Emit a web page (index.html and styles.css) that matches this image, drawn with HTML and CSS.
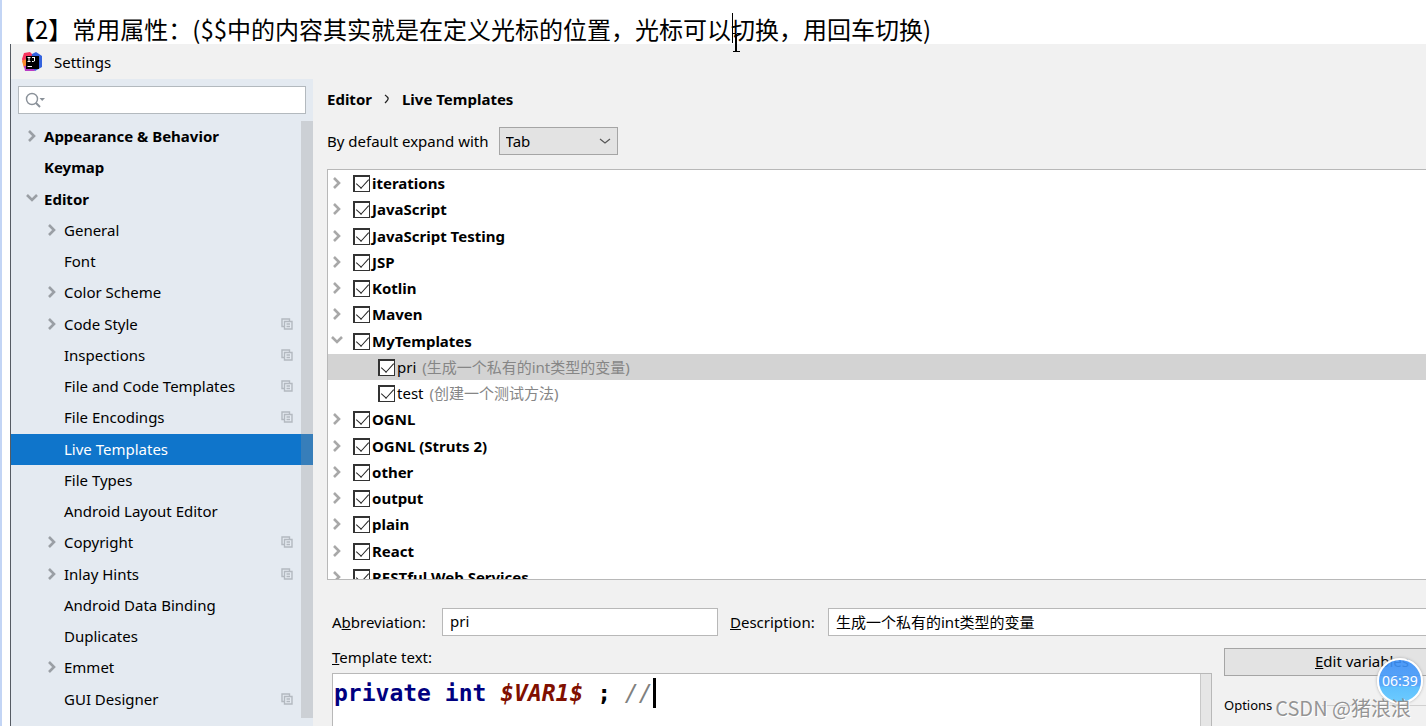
FILE: index.html
```html
<!doctype html>
<html lang="zh">
<head>
    <meta charset="UTF-8">
    <meta name="viewport" content="width=device-width, initial-scale=1.0">
    <title>Settings</title>
    <link rel="stylesheet" href="styles.css">
</head>
<body>
<!-- 公用图标 -->
<svg class="sprite" aria-hidden="true">
    <symbol id="right" viewBox="0 0 12 12"><path d="M3 1 L8 6 L3 11" fill="none" stroke="currentColor" stroke-width="2.6"/></symbol>
    <symbol id="down" viewBox="0 0 12 12"><path d="M1 2 L6 7 L11 2" fill="none" stroke="currentColor" stroke-width="2.6"/></symbol>
    <symbol id="copy" viewBox="0 0 12 12"><path d="M3 8.5 H1 V1 H8.5 V3 M3.5 3.5 H11 V11 H3.5 Z M5.5 6 H9 M5.5 8.5 H9" fill="none" stroke="currentColor" stroke-width="1.4"/></symbol>
</svg>

<h1 class="topic">【2】常用属性：($$中的内容其实就是在定义光标的位置，光标可以切换，用回车切换)</h1>
<svg class="pointer" viewBox="0 0 10 42" aria-hidden="true">
    <path d="M1.5 1 V31" stroke="#000" fill="none"/>
    <path d="M2 21.5 H4 M6 21.5 H9 M2 39.5 H9" stroke="#000" fill="none"/>
    <path d="M5 22 V39" stroke="#000" stroke-width="2" fill="none"/>
</svg>

<div class="dialog">
    <div class="titlebar">
        <svg class="logo" viewBox="0 0 20 20" aria-hidden="true">
            <path d="M0 7 L2 1 L8 0 L11 3 L7 13 L2 15 Z" fill="#f7355f"/>
            <path d="M0 9 L4 7 L6 14 L2 16 Z" fill="#fb8a2c"/>
            <path d="M10 2 L14 0 L20 4 L20 15 L13 19 L8 15 Z" fill="#3463de"/>
            <path d="M2 14 L9 13 L13 19 L3 19 Z" fill="#b83bc4"/>
            <rect x="4" y="4" width="13" height="13" fill="#000"/>
            <path d="M5.5 5.5 H8.5 M7 5.5 V9.5 M5.5 9.5 H8.5 M10 5.5 H13 M12.5 5.5 V9 L11.5 9.5 H10 M5.5 14.5 H10" stroke="#fff" fill="none"/>
        </svg>
        <span>Settings</span>
    </div>
    <div class="content">
        <div class="sidebar">
            <label class="search">
                <svg viewBox="0 0 22 16" aria-hidden="true">
                    <circle cx="7" cy="7" r="5.5" fill="none" stroke="#8a9199" stroke-width="1.4"/>
                    <path d="M11 11 L15 15" stroke="#8a9199" stroke-width="2"/>
                    <path d="M14.5 6 H20 L17.2 9 Z" fill="#8a9199"/>
                </svg>
                <input type="text" aria-label="Search">
            </label>
            <div class="tree">
                <ul class="menu">
                    <li class="top"><svg class="arrow"><use href="#right"/></svg>Appearance &amp; Behavior</li>
                    <li class="top">Keymap</li>
                    <li class="top"><svg class="arrow"><use href="#down"/></svg>Editor</li>
                    <li><svg class="arrow"><use href="#right"/></svg>General</li>
                    <li>Font</li>
                    <li><svg class="arrow"><use href="#right"/></svg>Color Scheme</li>
                    <li><svg class="arrow"><use href="#right"/></svg>Code Style<svg class="copy"><use href="#copy"/></svg></li>
                    <li>Inspections<svg class="copy"><use href="#copy"/></svg></li>
                    <li>File and Code Templates<svg class="copy"><use href="#copy"/></svg></li>
                    <li>File Encodings<svg class="copy"><use href="#copy"/></svg></li>
                    <li class="active">Live Templates</li>
                    <li>File Types</li>
                    <li>Android Layout Editor</li>
                    <li><svg class="arrow"><use href="#right"/></svg>Copyright<svg class="copy"><use href="#copy"/></svg></li>
                    <li><svg class="arrow"><use href="#right"/></svg>Inlay Hints<svg class="copy"><use href="#copy"/></svg></li>
                    <li>Android Data Binding</li>
                    <li>Duplicates</li>
                    <li><svg class="arrow"><use href="#right"/></svg>Emmet</li>
                    <li>GUI Designer<svg class="copy"><use href="#copy"/></svg></li>
                    <li>Images</li>
                </ul>
                <div class="scrollbar"></div>
            </div>
        </div>

        <div class="main">
            <div class="crumbs"><span>Editor</span><svg viewBox="0 0 6 10" aria-hidden="true"><path d="M1 1 Q5 4 4 5 Q4 6 1 9" fill="none" stroke="#222" stroke-width="1.3"/></svg><span>Live Templates</span></div>
            <div class="expand">
                <label for="expand">By default expand with</label>
                <div class="select">
                    <select id="expand"><option>Tab</option></select>
                    <svg viewBox="0 0 12 12" aria-hidden="true"><path d="M1 4 L6 8 L11 4" fill="none" stroke="#555" stroke-width="1.2"/></svg>
                </div>
            </div>

            <ul class="list">
                <li><svg class="arrow"><use href="#right"/></svg><label><input type="checkbox" checked>iterations</label></li>
                <li><svg class="arrow"><use href="#right"/></svg><label><input type="checkbox" checked>JavaScript</label></li>
                <li><svg class="arrow"><use href="#right"/></svg><label><input type="checkbox" checked>JavaScript Testing</label></li>
                <li><svg class="arrow"><use href="#right"/></svg><label><input type="checkbox" checked>JSP</label></li>
                <li><svg class="arrow"><use href="#right"/></svg><label><input type="checkbox" checked>Kotlin</label></li>
                <li><svg class="arrow"><use href="#right"/></svg><label><input type="checkbox" checked>Maven</label></li>
                <li><svg class="arrow"><use href="#down"/></svg><label><input type="checkbox" checked>MyTemplates</label></li>
                <li class="child active"><label><input type="checkbox" checked>pri <em>(生成一个私有的int类型的变量)</em></label></li>
                <li class="child"><label><input type="checkbox" checked>test <em>(创建一个测试方法)</em></label></li>
                <li><svg class="arrow"><use href="#right"/></svg><label><input type="checkbox" checked>OGNL</label></li>
                <li><svg class="arrow"><use href="#right"/></svg><label><input type="checkbox" checked>OGNL (Struts 2)</label></li>
                <li><svg class="arrow"><use href="#right"/></svg><label><input type="checkbox" checked>other</label></li>
                <li><svg class="arrow"><use href="#right"/></svg><label><input type="checkbox" checked>output</label></li>
                <li><svg class="arrow"><use href="#right"/></svg><label><input type="checkbox" checked>plain</label></li>
                <li><svg class="arrow"><use href="#right"/></svg><label><input type="checkbox" checked>React</label></li>
                <li><svg class="arrow"><use href="#right"/></svg><label><input type="checkbox" checked>RESTful Web Services</label></li>
            </ul>

            <div class="fields">
                <label class="abbr-label" for="abbr">A<u>b</u>breviation:</label>
                <input class="abbr" id="abbr" type="text" value="pri">
                <label class="desc-label" for="desc"><u>D</u>escription:</label>
                <input class="desc" id="desc" type="text" value="生成一个私有的int类型的变量">
            </div>

            <div class="bottom">
                <div class="template">
                    <div class="template-label" id="tpl"><u>T</u>emplate text:</div>
                    <div class="editor">
                        <div class="code" contenteditable="true" spellcheck="false" role="textbox" aria-labelledby="tpl"><b>private</b> <b>int</b> <i>$VAR1$</i> ; <s>//</s><span class="caret"></span></div>
                        <div class="code-scroll"></div>
                    </div>
                </div>
                <div class="options">
                    <button type="button"><u>E</u>dit variables</button>
                    <fieldset>
                        <legend>Options</legend>
                    </fieldset>
                </div>
            </div>
        </div>
    </div>
</div>

<div class="timer">06:39</div>
<div class="watermark">CSDN @猪浪浪</div>
</body>
</html>
```
FILE: styles.css
```css
*{
    box-sizing: border-box;
}
body{
    margin:0;
    height:100vh;
    display: flex;
    flex-direction: column;
    overflow: hidden;
    position: relative;
    border-left:2px solid #c3d5f5;
    background-color: #fff;
    color:#000;
    font:15px/20px "Noto Sans","Noto Sans CJK SC",sans-serif;
}
ul{
    list-style: none;
    margin:0;
    padding:0;
}
input,select,button{
    font:inherit;
    color:inherit;
}
.sprite{
    position: absolute;
    width:0;
    height:0;
}
.topic{
    flex:none;
    margin:0;
    height:44px;
    padding:11px 0 0 9px;
    font:400 24px/36px "Noto Sans CJK SC",sans-serif;
    white-space: nowrap;
}
.pointer{
    position: absolute;
    left:729px;
    top:12px;
    width:10px;
    height:42px;
}

.dialog{
    flex:1;
    min-height:0;
    display: flex;
    flex-direction: column;
    margin-left:8px;
    border-left:1px solid #555b63;
    background-color: #f1f1f1;
}
.titlebar{
    flex:none;
    height:35px;
    display: flex;
    align-items: center;
    gap:12px;
    padding:0 0 0 11px;
}
.logo{
    width:20px;
    height:20px;
}
.content{
    flex:1;
    min-height:0;
    display: flex;
}

/* 左侧菜单 */
.sidebar{
    flex:none;
    width:302px;
    display: flex;
    flex-direction: column;
    background-color: #e4eaf1;
}
.search{
    flex:none;
    height:28px;
    margin:7px 7px;
    display: flex;
    align-items: center;
    padding-left:6px;
    border:1px solid #b3b9be;
    background-color: #fff;
}
.search svg{
    width:22px;
    height:16px;
}
.search input{
    flex:1;
    min-width:0;
    border:0;
    outline:0;
    background: none;
}
.tree{
    flex:1;
    min-height:0;
    display: flex;
    position: relative;
    overflow: hidden;
}
.menu{
    flex:1;
}
.menu li{
    height:31px;
    display: flex;
    align-items: center;
    padding:0 20px 2px 33px;
}
.menu li:nth-child(4n+2){
    margin-bottom:1px;
}
.menu li::before{
    content:"";
    width:20px;
    order:-2;
}
.menu .top{
    padding-left:13px;
    font-weight:700;
}
.menu .active{
    background-color: #0f75cb;
    color:#fff;
}
.arrow{
    width:12px;
    height:12px;
    color:#9a9fa5;
}
.menu .arrow{
    order:-1;
    margin:0 6px 0 -18px;
}
.list .arrow{
    color:#a8a8a8;
}
.copy{
    width:12px;
    height:12px;
    margin-left:auto;
    color:#b3b9c0;
}
.scrollbar{
    position: absolute;
    top:0;
    right:0;
    bottom:8px;
    width:12px;
    background-color: rgba(150,150,150,.3);
}

/* 右侧内容 */
.main{
    flex:1;
    min-width:0;
    display: flex;
    flex-direction: column;
    padding-left:14px;
    overflow: hidden;
}
.crumbs{
    flex:none;
    display: flex;
    align-items: center;
    gap:12px;
    margin-top:10px;
    font-weight:700;
}
.crumbs svg{
    width:6px;
    height:10px;
}
.expand{
    flex:none;
    display: flex;
    align-items: center;
    gap:10px;
    margin:18px 0 14px;
}
.select{
    position: relative;
}
.select select{
    display: block;
    width:119px;
    height:28px;
    padding:0 6px;
    border:1px solid #a5a5a5;
    border-radius:0;
    background-color: #e3e3e3;
    appearance: none;
}
.select svg{
    position: absolute;
    right:7px;
    top:8px;
    width:12px;
    height:12px;
    pointer-events: none;
}
.list{
    flex:1;
    min-height:0;
    overflow: hidden;
    border:1px solid #b8b8b8;
    border-right:0;
    background-color: #fff;
    font-weight:700;
}
.list li{
    height:26px;
    display: flex;
    align-items: center;
    gap:10px;
    padding-left:3px;
}
.list li:nth-child(4n+2){
    margin-bottom:1px;
}
.list .child{
    padding-left:50px;
    font-weight:400;
}
.list .active{
    background-color: #d3d3d3;
}
.list label{
    display: flex;
    align-items: center;
    gap:2px;
    white-space: pre;
}
.list em{
    color:#868686;
    font-style: normal;
}
.list input{
    appearance: none;
    flex:none;
    display: grid;
    place-items: center;
    width:17px;
    height:17px;
    margin:0;
    border:1px solid #333;
    border-width:2px 1px 1px 2px;
    background-color: #fff;
}
.list input:checked::before{
    content:"";
    width:6px;
    height:11px;
    margin-top:-4px;
    border:solid #222;
    border-width:0 1px 1px 0;
    transform: rotate(42deg);
}

.fields{
    flex:none;
    display: flex;
    align-items: center;
    margin-top:28px;
    padding-left:5px;
}
.fields input{
    height:28px;
    padding:0 7px 2px;
    border:1px solid #b8b8b8;
    background-color: #fff;
}
.abbr-label{
    width:110px;
}
.fields .abbr{
    width:276px;
}
.desc-label{
    width:98px;
    margin-left:12px;
}
.fields .desc{
    flex:1;
    min-width:0;
    border-right:0;
}
.bottom{
    flex:none;
    display: flex;
    gap:12px;
    height:90px;
    padding:12px 0 0 5px;
}
.template{
    flex:1;
    display: flex;
    flex-direction: column;
    gap:7px;
}
.template-label{
    line-height:18px;
}
.editor{
    flex:1;
    display: flex;
    border:1px solid #b8b8b8;
    border-bottom:0;
    background-color: #fff;
}
.code{
    flex:1;
    padding:4px 1px;
    font:700 23px/30px "DejaVu Sans Mono",monospace;
    white-space: pre;
    outline:0;
}
.code b{
    color:#000080;
}
.code i{
    color:#800f00;
}
.code s{
    color:#808080;
    font-weight:400;
    font-style: italic;
    text-decoration: none;
}
.caret{
    display: inline-block;
    width:3px;
    height:30px;
    vertical-align: top;
    background-color: #000;
}
.code-scroll{
    width:11px;
    border-left:1px solid #c8c8c8;
    background-color: #e6e6e6;
}
/* 按钮比窗口宽，右边被裁掉 */
.options{
    width:276px;
    margin-right:-74px;
}
.options button{
    display: block;
    width:100%;
    height:28px;
    padding:0 0 2px;
    border:1px solid #a5a5a5;
    background-color: #e3e3e3;
}
.options fieldset{
    height:40px;
    margin:19px 0 0;
    padding:0;
    border:0;
    border-top:1px solid #d0d0d0;
}
.options legend{
    padding:0 50px 0 0;
    font-size:13px;
}

.timer{
    position: absolute;
    right:3px;
    bottom:22px;
    width:46px;
    height:46px;
    border:2px solid #fff;
    border-radius:50%;
    background: linear-gradient(rgba(60,145,250,.9) 0,rgba(74,160,250,.9) 62%,#5fc0fd 64%,#6ccbff);
    box-shadow: 0 0 3px #aaa;
    color:#fff;
    font-size:14px;
    line-height:42px;
    text-align: center;
}
.watermark{
    position: absolute;
    right:15px;
    bottom:3px;
    color:rgba(130,130,130,.85);
    font:20px/30px "Noto Sans CJK SC",sans-serif;
    text-shadow: 1px 1px 0 #fff;
}
```
